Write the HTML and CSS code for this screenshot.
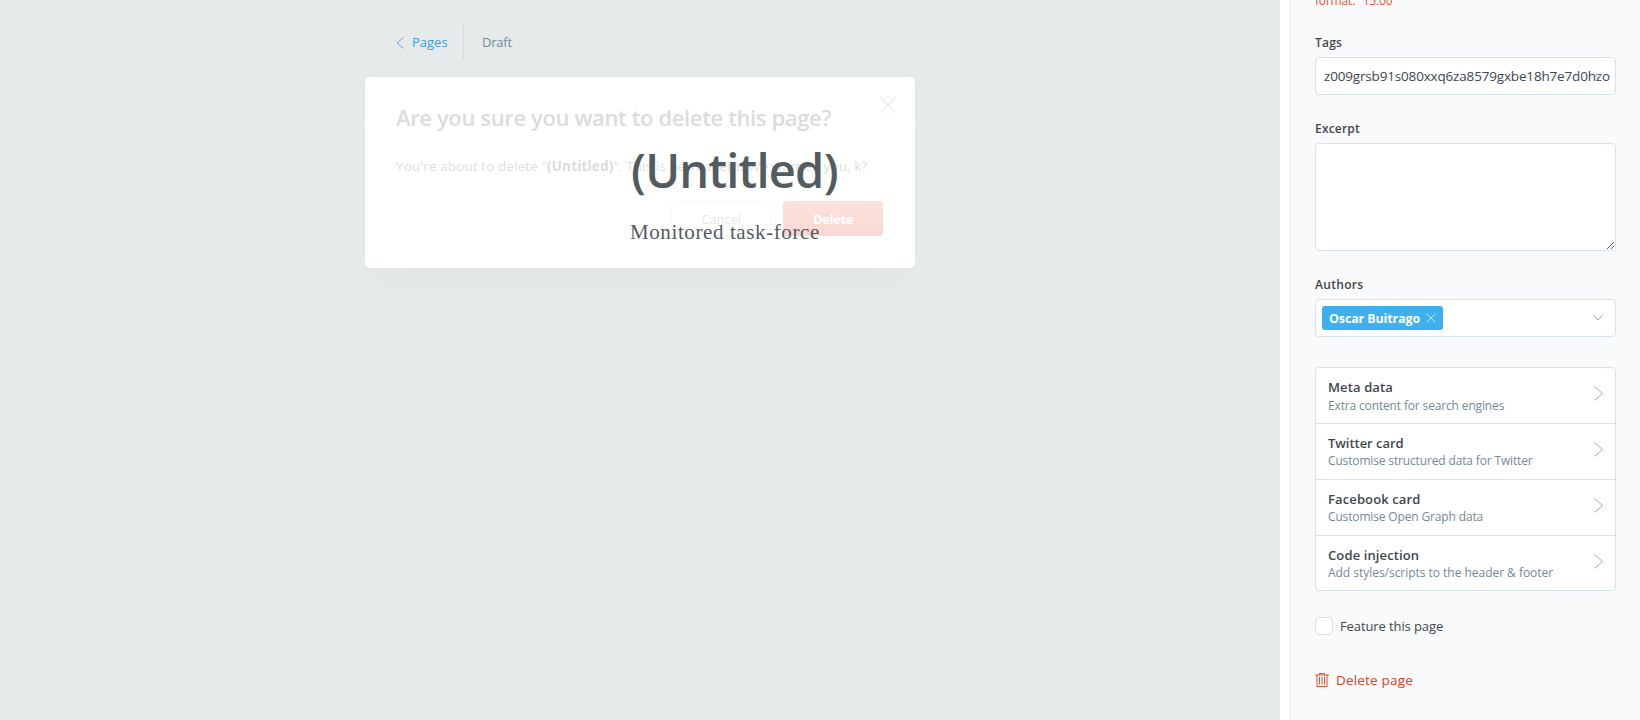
FILE: index.html
```html
<!DOCTYPE html>
<html lang="en">
<head>
<meta charset="utf-8">
<title>Ghost editor</title>
<link rel="stylesheet" href="styles.css">
</head>
<body>
<div class="app">
  <main class="editor">
    <header class="editor-header">
      <a class="back"><svg class="back-icon" viewBox="0 0 8 12"><path d="M7.500 0.500L1 6l6.500 5.500"/></svg><span>Pages</span></a>
      <span class="status"><span>Draft</span></span>
    </header>
    <section class="modal">
      <h2 class="modal-title">Are you sure you want to delete this page?</h2>
      <p class="modal-text">You're about to delete "<b>(Untitled)</b>". This is permanent! We warned you, k?</p>
      <div class="modal-actions">
        <span class="btn btn-cancel">Cancel</span>
        <span class="btn btn-delete">Delete</span>
      </div>
      <svg class="modal-close" viewBox="0 0 16 16"><path d="M0 0l16 16M16 0L0 16"/></svg>
    </section>
    <article class="post">
      <h1 class="post-title">(Untitled)</h1>
      <p class="post-body">Monitored task-force</p>
    </article>
  </main>
  <aside class="settings">
    <p class="error">format: "15:00"</p>
    <label class="label">Tags</label>
    <div class="field tags"><span>z009grsb91s080xxq6za8579gxbe18h7e7d0hzo</span><svg class="arrow" viewBox="0 0 10 6"><path d="M.5.5L5 5 9.500.5"/></svg></div>
    <label class="label">Excerpt</label>
    <textarea class="excerpt"></textarea>
    <label class="label authors-label">Authors</label>
    <div class="field authors"><span class="token">Oscar Buitrago<svg class="token-x" viewBox="0 0 10 10"><path d="M.5.5l9 9M9.500.5l-9 9"/></svg></span><svg class="arrow" viewBox="0 0 10 6"><path d="M.5.5L5 5 9.500.5"/></svg></div>
    <ul class="menu">
      <li><div><b>Meta data</b><span>Extra content for search engines</span></div><svg class="chev" viewBox="0 0 9 15"><path d="M.5.5l8 7-8 7"/></svg></li>
      <li><div><b class="tight">Twitter card</b><span>Customise structured data for Twitter</span></div><svg class="chev" viewBox="0 0 9 15"><path d="M.5.5l8 7-8 7"/></svg></li>
      <li><div><b>Facebook card</b><span>Customise Open Graph data</span></div><svg class="chev" viewBox="0 0 9 15"><path d="M.5.5l8 7-8 7"/></svg></li>
      <li><div><b>Code injection</b><span class="wide">Add styles/scripts to the header &amp; footer</span></div><svg class="chev" viewBox="0 0 9 15"><path d="M.5.5l8 7-8 7"/></svg></li>
    </ul>
    <div class="feature"><span class="checkbox"></span><span>Feature this page</span></div>
    <div class="delete"><svg class="trash" viewBox="0 0 14 14"><path d="M0 2h14M4.500 2V.5h5V2M2 2v11.500h10V2M4.500 4v7.500M7 4v7.500M9.500 4v7.500"/></svg><span>Delete page</span></div>
  </aside>
</div>
</body>
</html>
```
FILE: styles.css
```css
* { box-sizing: border-box; }
body {
  margin: 0;
  font-family: "Open Sans", "Noto Sans", sans-serif;
  font-size: 13px;
  color: #3e474c;
}
p, h1, h2, ul { margin: 0; padding: 0; font-weight: 400; list-style: none; }
svg { display: block; fill: none; flex: none; }
.app { display: flex; width: 1640px; height: 720px; overflow: hidden; background: #fff; }
.editor { position: relative; width: 1280px; background: #e6eaeb; }
.editor-header { display: flex; padding: 25px 0 0 396px; height: 77px; }
.back { display: flex; align-items: center; height: 35px; width: 68px; gap: 8px; color: #3a9fdb; border-right: 1px solid #d5dadc; }
.back span, .status span { margin-top: -1px; }
.back-icon { width: 8px; height: 12px; stroke: #5cb0e2; }
.status { display: flex; align-items: center; height: 35px; padding-left: 18px; color: #738a94; letter-spacing: -0.2px; }
.modal {
  position: relative;
  width: 550px;
  height: 191px;
  margin-left: 365px;
  padding: 24px 32px 0 31px;
  border-radius: 5px;
  background: #fff;
  box-shadow: 0 26px 30px -14px rgba(150, 70, 80, 0.04);
}
.modal-title { font-size: 22px; line-height: 32px; font-weight: 600; letter-spacing: -0.37px; color: #dadddd; white-space: nowrap; }
.modal-text { margin-top: 23px; line-height: 20px; font-size: 13.500px; letter-spacing: 0.1px; color: #dddfe0; white-space: pre; }
.modal-text b { color: #d9dcdd; letter-spacing: 0.18px; }
.modal-actions { display: flex; justify-content: flex-end; gap: 12px; margin-top: 25px; }
.btn { display: flex; align-items: center; justify-content: center; width: 100px; height: 35px; border-radius: 4px; }
.btn-cancel { border: 1px solid #f7f8f9; color: #e4e8e9; letter-spacing: -0.12px; }
.btn-delete { background: linear-gradient(#fce2dd, #f9d7d2); color: #fff; font-weight: 700; letter-spacing: -0.38px; }
.modal-close { position: absolute; right: 19px; top: 20px; width: 16px; height: 16px; stroke: #e3e6e7; }
.post { position: absolute; left: 630px; top: 137px; color: #525b60; }
.post-title { padding-left: 1px; font-size: 47px; line-height: 66px; font-weight: 600; letter-spacing: -0.75px; white-space: nowrap; }
.post-body { margin-top: 17px; font: 21px/24px "Liberation Serif", serif; letter-spacing: 0.6px; white-space: nowrap; }
.settings {
  position: relative;
  width: 350px;
  padding: 0 24px;
  border-left: 1px solid #e0eaf0;
  margin-left: 10px;
  background: #f9fafc;
}
.error { height: 34px; line-height: 20px; margin-top: -9px; color: #f05230; font-size: 12px; letter-spacing: -0.18px; }
.label { display: block; height: 32px; line-height: 20px; padding-top: 8px; font-size: 12px; font-weight: 600; letter-spacing: 0.2px; color: #3e474c; }
.authors-label { letter-spacing: 0.3px; }
.field { display: flex; align-items: center; height: 38px; width: 301px; border: 1px solid #d6e3eb; border-radius: 4px; background: #fff; position: relative; }
.tags { padding-left: 8px; font-size: 13.500px; letter-spacing: -0.17px; white-space: nowrap; margin-bottom: 16px; }
.arrow { position: absolute; right: 12px; top: 15px; width: 10px; height: 6px; stroke: #97a8b1; }
.excerpt { display: block; width: 301px; height: 108px; margin: 0 0 16px; border: 1px solid #d6e3eb; border-radius: 4px; background: #fff; }
.authors { padding-left: 6px; }
.token { display: flex; align-items: center; gap: 6px; height: 24px; width: 121px; padding-left: 7px; border-radius: 3px; background: #3eb0ef; color: #fff; font-weight: 700; font-size: 12.500px; letter-spacing: -0.14px; white-space: nowrap; }
.token-x { width: 10px; height: 10px; stroke: #c3e6fa; }
.menu { width: 301px; margin-top: 30px; border: 1px solid #d6e3eb; border-radius: 4px; background: #fff; }
.menu li { display: flex; justify-content: space-between; height: 56px; padding: 10px 12px 0 12px; border-bottom: 1px solid #d6e3eb; white-space: nowrap; }
.menu li:last-child { border: 0; height: 54px; }
.menu b { display: block; font-weight: 600; font-size: 13px; line-height: 19px; letter-spacing: 0.12px; }
.menu b.tight { letter-spacing: -0.04px; }
.menu div > span { display: block; font-size: 12px; line-height: 17px; letter-spacing: -0.15px; color: #738a94; }
.menu div > span.wide { letter-spacing: -0.03px; }
.menu li + li div > span { margin-top: -1px; }
.chev { width: 9px; height: 15px; margin-top: 8px; stroke: #97a8b1; }
.feature { display: flex; align-items: center; gap: 7px; height: 18px; margin-top: 26px; letter-spacing: -0.1px; }
.checkbox { width: 18px; height: 18px; border: 1px solid #d6e3eb; border-radius: 4px; background: #fff; }
.delete { display: flex; align-items: center; gap: 7px; margin-top: 36px; height: 18px; color: #e0401f; font-size: 13.500px; letter-spacing: 0.18px; }
.trash { width: 14px; height: 14px; stroke: #e04a2b; }
```
